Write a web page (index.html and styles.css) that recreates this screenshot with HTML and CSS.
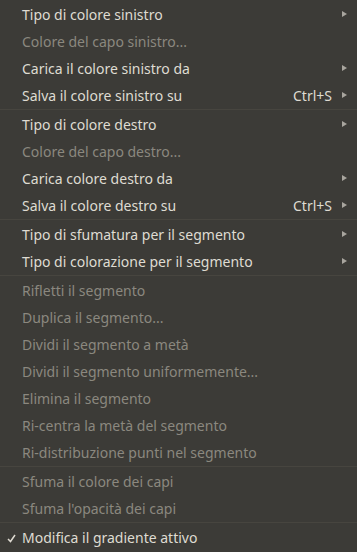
FILE: index.html
```html
<!DOCTYPE html>
<html lang="it">
<head>
  <meta charset="UTF-8" />
  <title>Menu gradiente</title>
  <link rel="stylesheet" href="styles.css">
</head>
<body>
  <div class="menu">
    <div class="item"><span class="label">Tipo di colore sinistro</span><span class="arrow"></span></div>
    <div class="item off"><span class="label">Colore del capo sinistro...</span></div>
    <div class="item"><span class="label">Carica il colore sinistro da</span><span class="arrow"></span></div>
    <div class="item"><span class="label">Salva il colore sinistro su</span><span class="accel">Ctrl+S</span><span class="arrow"></span></div>
    <div class="sep"></div>

    <div class="item"><span class="label">Tipo di colore destro</span><span class="arrow"></span></div>
    <div class="item off"><span class="label">Colore del capo destro...</span></div>
    <div class="item"><span class="label">Carica colore destro da</span><span class="arrow"></span></div>
    <div class="item"><span class="label">Salva il colore destro su</span><span class="accel">Ctrl+S</span><span class="arrow"></span></div>
    <div class="sep"></div>

    <div class="item"><span class="label">Tipo di sfumatura per il segmento</span><span class="arrow"></span></div>
    <div class="item"><span class="label">Tipo di colorazione per il segmento</span><span class="arrow"></span></div>
    <div class="sep"></div>

    <div class="item off"><span class="label">Rifletti il segmento</span></div>
    <div class="item off"><span class="label">Duplica il segmento...</span></div>
    <div class="item off"><span class="label">Dividi il segmento a metà</span></div>
    <div class="item off"><span class="label">Dividi il segmento uniformemente...</span></div>
    <div class="item off"><span class="label">Elimina il segmento</span></div>
    <div class="item off"><span class="label">Ri-centra la metà del segmento</span></div>
    <div class="item off"><span class="label">Ri-distribuzione punti nel segmento</span></div>
    <div class="sep"></div>

    <div class="item off"><span class="label">Sfuma il colore dei capi</span></div>
    <div class="item off"><span class="label">Sfuma l'opacità dei capi</span></div>
    <div class="sep"></div>

    <div class="item">
      <svg class="check" width="9" height="9" viewBox="0 0 9 9">
        <path d="M1 5 L3.5 7.5 L8 1" fill="none" stroke="#dfdbd2" stroke-width="1.5"/>
      </svg>
      <span class="label">Modifica il gradiente attivo</span>
    </div>
  </div>
</body>
</html>
```

FILE: styles.css
```css
body {
  margin: 0;
  background: #3c3b37;
  font-family: 'Noto Sans', sans-serif;
  font-size: 14px;
}
.menu {
  width: 357px;
  height: 552px;
  box-sizing: border-box;
  padding: 1px 0;
  background: #3c3b37;
  color: #dfdbd2;
}
.item {
  position: relative;
  display: flex;
  align-items: center;
  height: 27px;
  box-sizing: border-box;
  padding: 0 10px 1px 22px;
}
.item.off {
  color: #8b887f;
}
.label {
  flex: 1;
  white-space: nowrap;
}
.accel {
  margin-right: 10px;
}
.arrow {
  width: 0;
  height: 0;
  border-left: 5px solid #a8a59e;
  border-top: 3px solid transparent;
  border-bottom: 3px solid transparent;
}
.check {
  position: absolute;
  left: 7px;
  top: 10px;
}
.sep {
  height: 2px;
  box-sizing: border-box;
  border-top: 1px solid #47453f;
}
```
